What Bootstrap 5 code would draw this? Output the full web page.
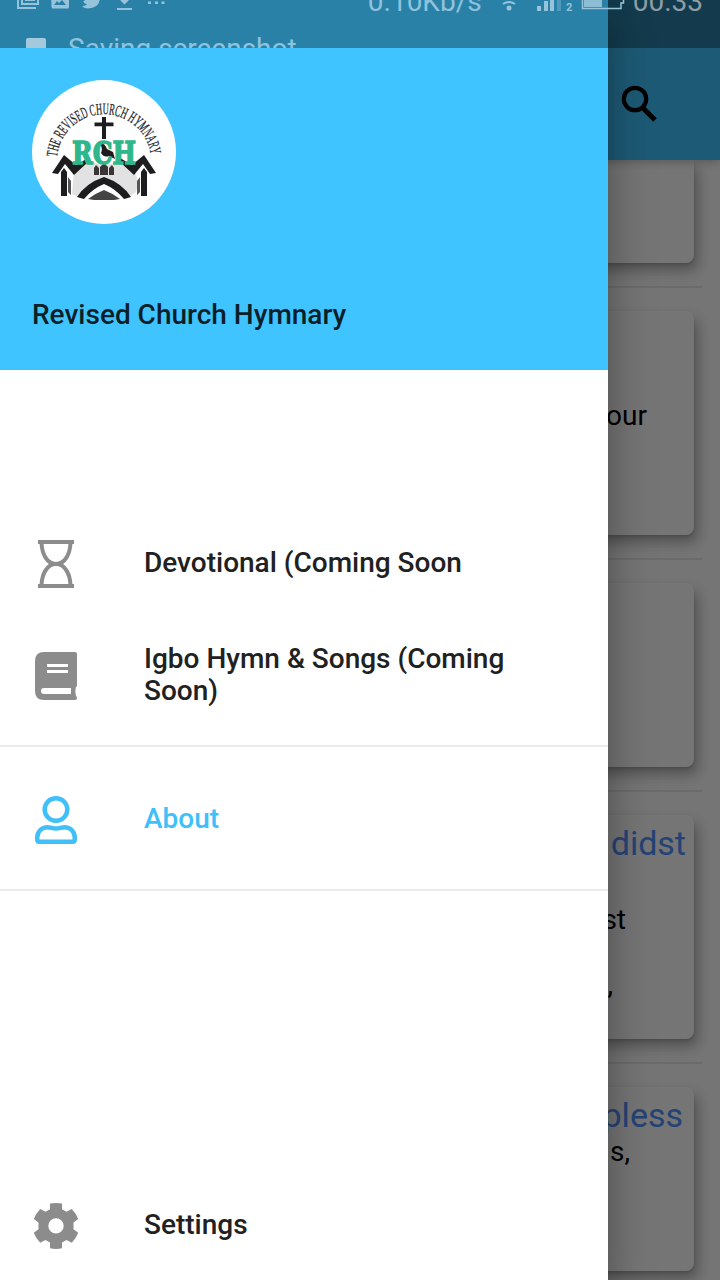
<!DOCTYPE html>
<html lang="en">
<head>
    <meta charset="UTF-8">
    <meta name="viewport" content="width=device-width, initial-scale=1">
    <title>Revised Church Hymnary</title>
    <link href="https://cdn.jsdelivr.net/npm/bootstrap@5.3.0/dist/css/bootstrap.min.css" rel="stylesheet">
    <style>
        body { font-family: Roboto, "Liberation Sans", sans-serif; font-size: 28px; line-height: 32px; color: #000; }
        .screen { width: 720px; height: 1280px; }
        .app-bar { height: 160px; background: #40c4ff; padding: 82px 60px 0 0; box-shadow: 0 3px 8px rgba(0,0,0,.2); z-index: 1; }
        .hymn { height: 224px; margin: 0 26px 0 16px; padding: 8px 0; border-radius: 8px; background: #fff; text-align: right; box-shadow: 4px 8px 14px rgba(0,0,0,.3), 0 2px 3px rgba(0,0,0,.12); }
        .hymn-cut { height: 103px; border-radius: 0 0 8px 8px; }
        .hymn-short { height: 184px; }
        .hymn-line { height: 2px; margin: 23px 18px 23px 16px; background: #e9e9e9; }
        .hymn-title { font-size: 34px; line-height: 40px; min-height: 40px; color: #4f92ff; }
        .hymn-title + .hymn-text { margin-top: 1px; }
        .hymn-text { line-height: 32.5px; min-height: 32.5px; }
        .scrim { background: rgba(0,0,0,.54); z-index: 2; }
        .drawer { width: 608px; z-index: 3; box-shadow: 0 16px 40px rgba(0,0,0,.36); }
        .drawer-head { height: 370px; padding: 80px 32px 0; background: #40c4ff; font-weight: 500; color: #0b1f29; }
        .drawer-title { margin-top: 75px; }
        .drawer-list { padding-top: 138px; }
        .tile { height: 112px; padding: 0 32px; font-weight: 500; color: #212121; }
        .tile svg { width: 48px; height: 48px; margin-right: 64px; flex: none; fill: #8c8c8c; }
        .tile span { padding-bottom: 2px; }
        .tile-active { color: #40bff8; }
        .tile-rule { height: 2px; margin: 13px 0 17px; background: #ebebeb; }
        .tile-last { margin-bottom: -2px; }
        .status { height: 48px; background: rgba(0,0,0,.34); z-index: 4; color: #8fc3dc; }
        .status-row { height: 32px; margin-top: -14px; padding: 0 17px 0 16px; }
        .status-row svg { fill: #96c3d9; }
        .toast-row { margin-top: 15px; padding-left: 26px; }
        .toast-box { width: 20px; height: 20px; margin: 5px 22px 0 0; border-radius: 2px; background: #a4c9dc; }
    </style>
</head>
<body class="m-0">
    <div class="screen position-relative overflow-hidden bg-white">
        <!-- Hymn list -->
        <main class="d-flex flex-column h-100">
            <header class="app-bar d-flex justify-content-end position-relative flex-shrink-0">
                <svg width="44" height="44" viewBox="0 0 44 44" fill="none" stroke="#000">
                    <circle cx="19" cy="17" r="11.2" stroke-width="4.2"/>
                    <path d="M26.5 25.5 39 38" stroke-width="5"/>
                </svg>
            </header>
            <div class="hymn hymn-cut flex-shrink-0"></div>
            <div class="hymn-line flex-shrink-0"></div>
            <div class="hymn flex-shrink-0">
                <div class="hymn-title"></div>
                <div class="hymn-title"></div>
                <div class="hymn-text" style="padding-right: 47px">our</div>
            </div>
            <div class="hymn-line flex-shrink-0"></div>
            <div class="hymn hymn-short flex-shrink-0"></div>
            <div class="hymn-line flex-shrink-0"></div>
            <div class="hymn flex-shrink-0">
                <div class="hymn-title" style="padding-right: 8px">didst</div>
                <div class="hymn-title"></div>
                <div class="hymn-text" style="padding-right: 68px">st</div>
                <div class="hymn-text"></div>
                <div class="hymn-text" style="padding-right: 81px">,</div>
            </div>
            <div class="hymn-line flex-shrink-0"></div>
            <div class="hymn hymn-short flex-shrink-0">
                <div class="hymn-title" style="padding-right: 11px">pless</div>
                <div class="hymn-text" style="padding-right: 64px">s,</div>
            </div>
        </main>
        <div class="scrim position-absolute top-0 start-0 w-100 h-100"></div>

        <!-- Drawer -->
        <nav class="drawer position-absolute top-0 start-0 h-100 bg-white d-flex flex-column">
            <div class="drawer-head flex-shrink-0">
                <svg class="d-block" width="144" height="144" viewBox="8 8 144 144">
                    <circle cx="80" cy="80" r="72" fill="#fff"/>
                    <path id="arc" d="M33 85A47.200 47.200 0 0 1 127 85" fill="none"/>
                    <text font-family="Liberation Serif, serif" font-size="16" fill="#1d1d1f" stroke="#1d1d1f" stroke-width=".25" textLength="137" lengthAdjust="spacingAndGlyphs"><textPath href="#arc" textLength="137" lengthAdjust="spacingAndGlyphs">THE REVISED CHURCH HYMNARY</textPath></text>
                    <!-- church -->
                    <path d="M50 99 64 89 74 92H86L96 89 110 99Q116 108 112 120L102 127Q94 113 80 108Q66 113 58 127L48 122Z" fill="#e2e2e3"/>
                    <path d="M28 101 40 83 52 93 64 86V90L50 103 41 92 34 102ZM132 101 120 83 108 93 96 86V90L110 103 119 92 126 102Z" fill="#1d1d1f"/>
                    <path d="M37 100 40 96 43 100V124H37ZM117 100 120 96 123 100V124H117Z" fill="#1d1d1f"/>
                    <path d="M44 105 47 109V123L44 120ZM113 109 116 105V120L113 123Z" fill="#555"/>
                    <path d="M53 125Q62 111 80 105Q98 111 107 125L100 127Q92 117 80 112Q68 117 60 127Z" fill="#1d1d1f"/>
                    <path d="M64 127Q72 121 80 118Q88 121 96 127L90 128H70Z" fill="#444"/>
                    <path d="M70 96 72 93 75 96V103H70ZM76 95 80 91 84 95V103H76ZM85 96 88 93 90 96V103H85Z" fill="#3b3436"/>
                    <path d="M78 45H82V50.500H89.500V54.300H82V67H78V54.300H70.500V50.500H78Z" fill="#1d1d1f"/>
                    <path d="M76 71Q81 71 83 77L89 80 91 87 85 84Q80 86 77 81Q79 77 76 71Z" fill="#1d1d1f"/>
                    <g font-family="DejaVu Serif, serif" font-weight="700" font-size="32.500">
                        <text x="48" y="91.500" fill="#2fb78b" stroke="#2fb78b" stroke-width="1.500" textLength="64" lengthAdjust="spacingAndGlyphs">RCH</text>
                    </g>
                </svg>
                <div class="drawer-title">Revised Church Hymnary</div>
            </div>
            <div class="drawer-list d-flex flex-column flex-grow-1">
                <div class="tile d-flex align-items-center">
                    <svg viewBox="0 0 48 48">
                        <path d="M6 0H42V4H6ZM6 44H42V48H6Z"/>
                        <path d="M9.500 3C10 14 15 24 24 24S38 14 38.500 3M9.500 45C10 34 15 24 24 24S38 34 38.500 45" fill="none" stroke="#8c8c8c" stroke-width="4"/>
                    </svg>
                    <span>Devotional (Coming Soon</span>
                </div>
                <div class="tile d-flex align-items-center">
                    <svg viewBox="0 0 48 48">
                        <path fill-rule="evenodd" d="M12 0H43Q45 0 45 2V33Q45 34.500 43.800 35.500Q42.800 39 43.800 43.500Q45 44.500 45 46Q45 48 43 48H12Q3 48 3 39V9Q3 0 12 0ZM15 12V15H36V12ZM15 18V21H36V18ZM12 36Q9 36 9 39T12 42H39V36Z"/>
                    </svg>
                    <span>Igbo Hymn &amp; Songs (Coming Soon)</span>
                </div>
                <div class="tile-rule"></div>
                <div class="tile tile-active d-flex align-items-center">
                    <svg viewBox="0 0 48 48">
                        <g fill="none" stroke="#40bff8" stroke-width="4.500">
                            <circle cx="24" cy="13.500" r="11.300"/>
                            <path d="M15.500 31.200C19 31.200 20 32.500 24 32.500S29 31.200 32.500 31.200C38.500 31.200 42.750 36 42.750 41.500V43.500Q42.750 45.750 40.500 45.750H7.500Q5.250 45.750 5.250 43.500V41.500C5.250 36 9.500 31.200 15.500 31.200Z"/>
                        </g>
                    </svg>
                    <span>About</span>
                </div>
                <div class="tile-rule"></div>
                <div class="tile tile-last mt-auto d-flex align-items-center">
                    <svg viewBox="0 0 48 48">
                        <path fill-rule="evenodd" d="M18 1.500Q24 .3 30 1.500V7.200L34.500 9.700 39.800 7Q44 11.300 46.200 17L41.500 20.500V27.300L46.200 30.800Q44 36.500 39.800 40.800L34.500 38.100 30 40.600V46.300Q24 47.500 18 46.300V40.600L13.500 38.100 8.200 40.800Q4 36.500 1.800 30.800L6.500 27.300V20.500L1.800 17Q4 11.300 8.200 7L13.500 9.700 18 7.200ZM24 16.200A7.700 7.700 0 1 0 24 31.600A7.700 7.700 0 1 0 24 16.200Z"/>
                    </svg>
                    <span>Settings</span>
                </div>
            </div>
        </nav>

        <!-- Status bar, half scrolled away by the incoming notification -->
        <div class="status position-absolute top-0 start-0 w-100 overflow-hidden">
            <div class="status-row d-flex">
                <svg width="152" height="32" viewBox="0 -14 152 32">
                    <path d="M1-12H3V7H20V9H1ZM5-12H23V5H5ZM7-10V3H21V-10Z" fill-rule="evenodd"/>
                    <path d="M9-8H19V1H9Z"/>
                    <path d="M35-9H53V7Q53 8.500 51.500 8.500H37Q35.500 8.500 35.500 7ZM38 5H50L46 0 43 3 41 1Z" fill-rule="evenodd"/>
                    <path d="M66-8Q70-3 75-3Q75-9 80-9L83-7H86L84-3Q84 8 72 8.500Q68 8.500 66 6Q69 6 71 4.500Q68 4 67 1H69Q66-2 66-8Z"/>
                    <path d="M101 8H116V10H101ZM105-8H112V-3H116L108.500 4.500 101-3H105Z"/>
                    <path d="M132 1.500H135V4H132ZM139 1.500H142V4H139ZM145.500 1.500H148.500V4H145.500Z"/>
                </svg>
                <span class="ms-auto">0.10Kb/s</span>
                <svg class="flex-shrink-0" width="151" height="32" viewBox="482 -14 151 32">
                    <path d="M503 4Q509 0 515 4M499-2Q509-9 519-2" fill="none" stroke="#96c3d9" stroke-width="2"/>
                    <circle cx="509" cy="8" r="2.500"/>
                    <path d="M537 6H541V11H537ZM544 1H548V11H544ZM550-4H554V11H550Z"/>
                    <path d="M557-9H561V11H557Z" opacity=".35"/>
                    <text x="566" y="11" font-size="11" font-weight="700">2</text>
                    <path d="M584-8H602V7H584Z" opacity=".9"/>
                    <path d="M582.500-9V8.500H621V3H623.500V-3H621V-9" fill="none" stroke="#96c3d9" stroke-width="1.500"/>
                </svg>
                <span style="color: #8d9da6">00.33</span>
            </div>
            <div class="toast-row d-flex">
                <div class="toast-box"></div>
                <span>Saving screenshot</span>
            </div>
        </div>
    </div>
    <script src="https://cdn.jsdelivr.net/npm/bootstrap@5.3.0/dist/js/bootstrap.bundle.min.js"></script>
</body>
</html>
